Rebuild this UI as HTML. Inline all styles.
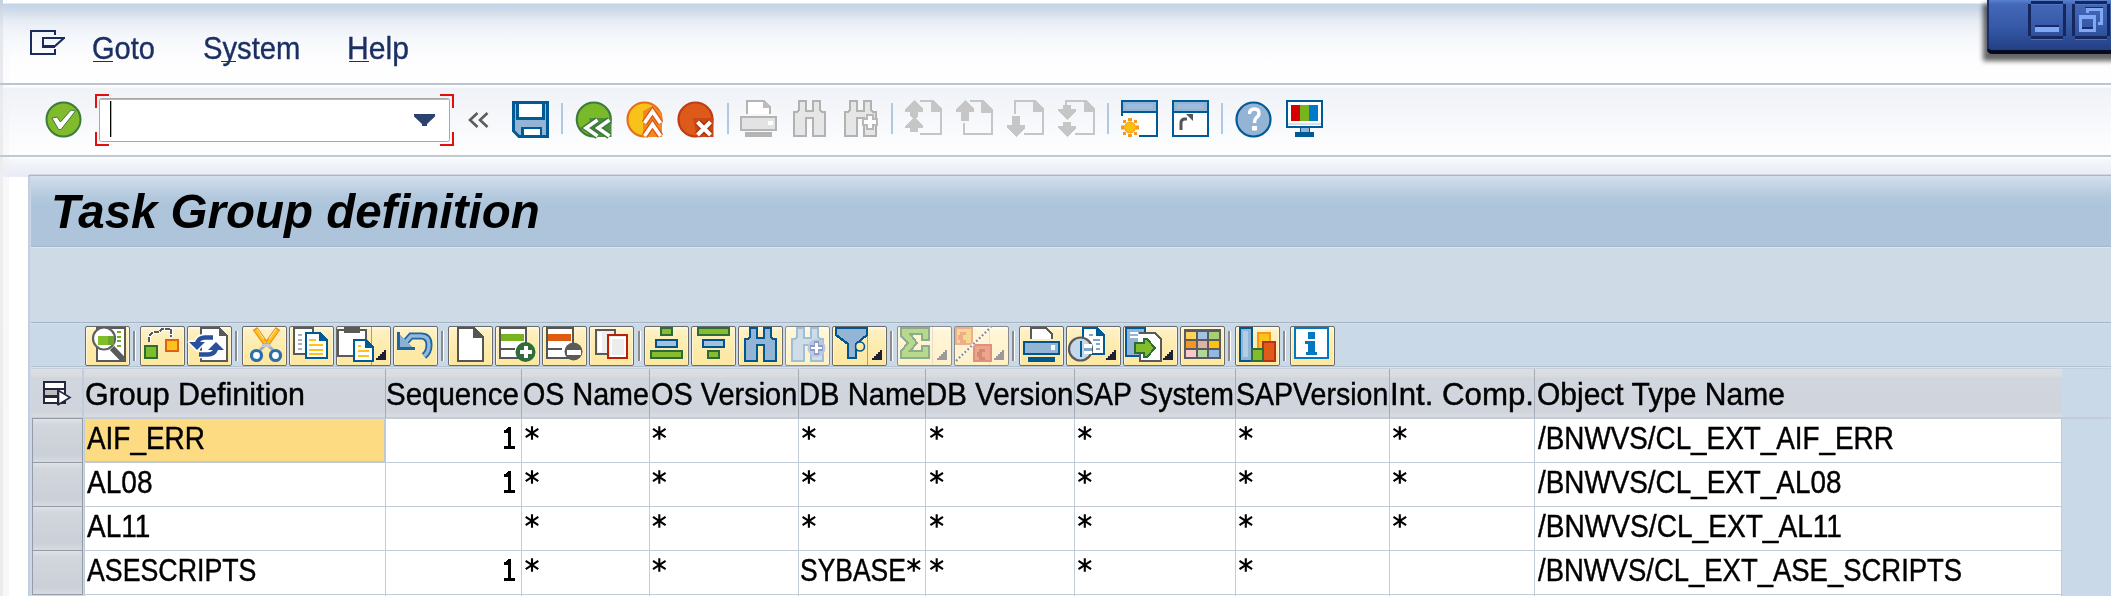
<!DOCTYPE html>
<html><head><meta charset="utf-8"><style>
*{margin:0;padding:0;box-sizing:border-box}
html,body{width:2111px;height:596px;overflow:hidden;background:#fff;font-family:"Liberation Sans",sans-serif}
.a{position:absolute}
svg{position:absolute;overflow:visible}
.txt{position:absolute;font-size:32px;color:#000;white-space:nowrap;line-height:1;transform-origin:0 0;-webkit-text-stroke:0.45px #000}
.sel{position:absolute;left:32px;width:51px;height:45px;border:1px solid #939da9;background:linear-gradient(#dfe2e7,#d2d6dd 6px,#cbd0d8 36px,#d6dadf 42px)}
.menu{position:absolute;color:#1b2f63;font-size:32px;line-height:1;white-space:nowrap;transform-origin:0 0;-webkit-text-stroke:0.35px #1b2f63}
.btn{position:absolute;top:326px;height:40px;border:1px solid #6b6b6b;border-radius:2px;background:linear-gradient(#fffbea 0,#fdf1c4 3px,#fdeeb6 12px,#fde9a6 28px,#fde8a2);box-shadow:inset 1px 0 0 #fff6d8,inset -1px 0 0 #fff6d8}
.btn.dis{border-color:#8c8c8c;background:linear-gradient(#fffdf4 0,#fff6d8 4px,#fff2cc 30px,#fff0c4)}
</style></head><body>
<div class="a" style="left:0px;top:0px;width:2111px;height:83px;background:linear-gradient(#fff 0,#fff 3px,#c4d4e8 4px,#cbd8e9 9px,#d8e0eb 14px,#e5ebf3 20px,#eef2f8 28px,#f7f9fc 42px,#fdfdfe 60px,#fff 83px);"></div>
<div class="a" style="left:0px;top:85px;width:2111px;height:71px;background:linear-gradient(#fdfeff 0,#fdfeff 2px,#eff2f7 3px,#f5f7fa 30px,#fafbfd 50px,#fefefe 70px);"></div>
<div class="a" style="left:0px;top:157px;width:2111px;height:20px;background:linear-gradient(#fdfdfe 0,#fdfdfe 1px,#f6f8fb 2px,#eef1f8 10px,#e8ecf6 18px);"></div>
<div class="a" style="left:0px;top:0px;width:3px;height:596px;background:linear-gradient(#c4d0e0 0,#e5e8ec 30px,#eceef0 175px,#ebebec 596px);"></div>
<div class="a" style="left:3px;top:0px;width:6px;height:596px;background:linear-gradient(rgba(255,255,255,0) 0,rgba(240,240,242,0.5) 200px,rgba(240,240,242,0.5) 596px);"></div>
<div class="a" style="left:0px;top:83px;width:2111px;height:2px;background:#bcc5d1;"></div>
<div class="a" style="left:0px;top:155px;width:2111px;height:2px;background:#c0c8d3;"></div>
<div class="menu" style="left:91.6px;top:32.4px;transform:scaleX(0.9075)">Goto</div>
<div class="a" style="left:93px;top:61px;width:20px;height:1px;background:#1b2f63;"></div>
<div class="menu" style="left:202.7px;top:32.4px;transform:scaleX(0.9136)">System</div>
<div class="a" style="left:221px;top:61px;width:15px;height:1px;background:#1b2f63;"></div>
<div class="menu" style="left:347.1px;top:32.4px;transform:scaleX(0.9403)">Help</div>
<div class="a" style="left:349px;top:61px;width:20px;height:1px;background:#1b2f63;"></div>
<svg style="left:0;top:0" width="2111" height="175" viewBox="0 0 2111 175">
<defs>
<linearGradient id="wbox" x1="0" y1="0" x2="0" y2="1"><stop offset="0" stop-color="#5a80d0"/><stop offset="0.08" stop-color="#4468b8"/><stop offset="0.5" stop-color="#3659a6"/><stop offset="1" stop-color="#1f3a80"/></linearGradient>
<filter id="blur2" x="-20%" y="-20%" width="140%" height="160%"><feGaussianBlur stdDeviation="2.5"/></filter>
</defs>
<g shape-rendering="crispEdges">
<!-- menu icon -->
<g fill="#1b2b5c">
<rect x="30" y="30" width="26" height="2.2"/><rect x="30" y="30" width="2.2" height="25"/><rect x="30" y="52.8" width="26" height="2.2"/>
<rect x="53.8" y="30" width="2.2" height="5"/><rect x="53.8" y="48.5" width="2.2" height="6.5"/>
<rect x="42" y="36.8" width="2.2" height="10.8"/><rect x="42" y="36.8" width="22.6" height="2.2"/><rect x="42" y="45.4" width="12.5" height="2.2"/>
</g>
</g>
<path d="M64,38 L54.5,46.5" stroke="#1b2b5c" stroke-width="2.2"/>

<!-- window controls -->
<rect x="1983" y="4" width="140" height="57" fill="#000" opacity="0.6" filter="url(#blur2)"/>
<path d="M1987,0 H2111 V54 H1993 Q1987,54 1987,48 Z" fill="url(#wbox)"/>
<path d="M1987,48 Q1987,54 1993,54 H2111 V50 H1991 Z" fill="#050a20"/>
<rect x="1987" y="0" width="2" height="49" fill="#1c2f6a"/>
<g shape-rendering="crispEdges">
<g fill="#16275e">
<rect x="2031" y="1" width="32" height="3"/><rect x="2031" y="36" width="32" height="3"/><rect x="2028" y="4" width="3" height="32"/><rect x="2063" y="4" width="3" height="32"/>
<rect x="2075" y="1" width="32" height="3"/><rect x="2075" y="36" width="32" height="3"/><rect x="2072" y="4" width="3" height="32"/><rect x="2107" y="4" width="3" height="32"/>
</g>
<g fill="#5a78c0" opacity="0.8">
<rect x="2031" y="39" width="32" height="1"/><rect x="2075" y="39" width="32" height="1"/>
<rect x="2031" y="4" width="32" height="1"/><rect x="2075" y="4" width="32" height="1"/>
</g>
<rect x="2035" y="25" width="24" height="1.5" fill="#1a2c68"/>
<rect x="2035" y="26.5" width="24" height="5.5" fill="#80a8f4"/>
<rect x="2085" y="7" width="18" height="1" fill="#1a2c68"/>
<path d="M2086,8 h17 v17 h-5 v-3 h2 v-11 h-11 v2 h-3 z" fill="#80a8f4"/>
<path d="M2079,15 h17 v17 h-17 z M2082,19 v10 h11 v-10 z" fill="#80a8f4" fill-rule="evenodd"/>
<rect x="2082" y="27" width="11" height="2" fill="#1a2c68"/>
</g>

<!-- check -->
<circle cx="63.5" cy="119.5" r="17" fill="#7fbb2c" stroke="#3d7b3d" stroke-width="2"/>
<path d="M52,118 L57,117 L60.5,122 L71,110 L75.5,111 L61,129.5 L58.5,129.5 Z" fill="#fff" stroke="#3d7b3d" stroke-width="1"/>

<!-- command field -->
<rect x="99.5" y="98.5" width="350" height="43" rx="2" fill="#fff" stroke="#a8a8a8" stroke-width="1"/>
<rect x="100" y="99" width="349" height="1" fill="#b8b8b8"/>
<g shape-rendering="crispEdges" fill="#e01010">
<rect x="95" y="94" width="2" height="14"/><rect x="95" y="94" width="14" height="2"/>
<rect x="95" y="132" width="2" height="14"/><rect x="95" y="144" width="14" height="2"/>
<rect x="452" y="94" width="2" height="14"/><rect x="440" y="94" width="14" height="2"/>
<rect x="452" y="132" width="2" height="14"/><rect x="440" y="144" width="14" height="2"/>
</g>
<rect x="110" y="101" width="1.3" height="36" fill="#000"/>
<path d="M414,114 H435 V116.5 L427,124 V126 H422 V124 L414,116.5 Z" fill="#2b4170"/>
<path d="M477.5,113 L470,120 L477.5,127 M487.5,113 L480,120 L487.5,127" fill="none" stroke="#5c5c5c" stroke-width="2.6"/>

<!-- save -->
<path d="M513.5,102.5 H547.5 V136.5 H519 L513.5,131 Z" fill="#94b4d6" stroke="#005a96" stroke-width="3"/>
<g shape-rendering="crispEdges">
<rect x="516" y="103" width="29" height="17" fill="#005a96"/>
<rect x="519" y="104" width="23" height="13" fill="#fff"/>
<rect x="521" y="127" width="21" height="11" fill="#005a96"/>
<rect x="524" y="129" width="16" height="6" fill="#fff"/>
</g>

<!-- separators -->
<g fill="#b0c8e2" shape-rendering="crispEdges">
<rect x="561" y="103" width="2" height="31"/><rect x="727" y="103" width="2" height="31"/><rect x="891" y="103" width="2" height="31"/><rect x="1107" y="103" width="2" height="31"/><rect x="1221" y="103" width="2" height="31"/>
</g>

<!-- back (green) -->
<circle cx="593.8" cy="119.5" r="17" fill="#7ab92a" stroke="#3b7b3b" stroke-width="2.2"/>
<path d="M589,118 H611.5 V137 H594 Z" fill="#4d8c3c"/>
<path d="M597.5,120 L586,128 L597.5,136 M609.5,120 L598,128 L609.5,136" fill="none" stroke="#3b7b3b" stroke-width="6.5" stroke-linejoin="miter"/>
<path d="M597.5,120 L586,128 L597.5,136 M609.5,120 L598,128 L609.5,136" fill="none" stroke="#fff" stroke-width="3.6" stroke-linejoin="miter"/>

<!-- exit (orange) -->
<circle cx="644.5" cy="119.5" r="17" fill="#f7c21a" stroke="#e46e1a" stroke-width="2.2"/>
<path d="M643,137 V111 L652.5,106 L662,113 V137 Z" fill="#ef8a20"/>
<path d="M644.5,123 L652.5,111.5 L660.5,123 M644.5,136 L652.5,124.5 L660.5,136" fill="none" stroke="#e05a16" stroke-width="6.5"/>
<path d="M644.5,123 L652.5,111.5 L660.5,123 M644.5,136 L652.5,124.5 L660.5,136" fill="none" stroke="#fff" stroke-width="3.6"/>

<!-- cancel (red) -->
<circle cx="695.5" cy="119.5" r="17" fill="#dd5a1b" stroke="#c13c12" stroke-width="2.2"/>
<path d="M693,118 H713.5 V137 H697 Z" fill="#c84816"/>
<path d="M697.5,122 L710.5,135 M710.5,122 L697.5,135" fill="none" stroke="#b8320f" stroke-width="7"/>
<path d="M697.5,122 L710.5,135 M710.5,122 L697.5,135" fill="none" stroke="#fff" stroke-width="4"/>

<!-- printer -->
<g shape-rendering="crispEdges">
<path d="M747,114 V101 H764 L770,107 V114" fill="#fff" stroke="#b4b4b4" stroke-width="2"/>
<path d="M763,101 h2 l5,5 v2 h-7 z" fill="#bdbdbd"/>
<rect x="741" y="117" width="35" height="13" fill="#e3e3e3" stroke="#b4b4b4" stroke-width="2"/>
<rect x="768" y="121" width="5" height="4" fill="#fff"/>
<rect x="745" y="132" width="27" height="5" fill="#b4b4b4"/>
</g>

<!-- binoculars -->
<g fill="#e6e6e6" stroke="#b2b2b2" stroke-width="2.2" shape-rendering="crispEdges">
<path d="M799,101 H806 V111 H813 V101 H820 V110 L822,112 H825 V136 H813 V118 H806 V136 H794 V112 H797 L799,110 Z"/>
<path d="M850,101 H857 V111 H864 V101 H871 V110 L873,112 H876 V136 H864 V118 H857 V136 H845 V112 H848 L850,110 Z"/>
</g>
<g shape-rendering="crispEdges">
<path d="M866,114 h8 v4 h4 v8 h-4 v4 h-8 v-4 h-4 v-8 h4 z" fill="#b8b8b8"/>
<path d="M868,116 h4 v4 h4 v4 h-4 v4 h-4 v-4 h-4 v-4 h4 z" fill="#fff"/>
</g>

<!-- page nav icons -->
<g fill="none" stroke="#c6c6c6" stroke-width="2" shape-rendering="crispEdges">
<path d="M920,101 H933 L941,109 V134 H920"/>
<path d="M970,101 H983 L992,110 V134 H964 V123"/>
<path d="M1015,114 V101 H1035 L1043,109 V134 H1024"/>
<path d="M1066,106 V101 H1086 L1094,109 V134 H1075"/>
</g>
<g fill="#c6c6c6" shape-rendering="crispEdges">
<path d="M931,101 h2 l9,9 v2 h-11 z"/><path d="M981,101 h2 l10,10 v2 h-12 z"/><path d="M1033,101 h2 l9,9 v2 h-11 z"/><path d="M1084,101 h2 l9,9 v2 h-11 z"/>
<path d="M914,100 L923,109 V112 H918 V116 L916,118 H912 L910,116 V112 H905 V109 Z"/>
<path d="M914,117 L923,126 V128 H918 V132 H910 V128 H905 V126 Z"/>
<path d="M965,100 L974,109 V112 H969 V121 H961 V112 H956 V109 Z"/>
<path d="M1016,137 L1025,128 V125 H1020 V116 H1012 V125 H1007 V128 Z"/>
<path d="M1067,137 L1076,128 V126 H1071 V122 H1063 V126 H1058 V128 Z"/>
<path d="M1067,120 L1076,111 V109 H1071 V105 H1063 V109 H1058 V111 Z"/>
</g>

<!-- new session -->
<g shape-rendering="crispEdges">
<rect x="1122" y="101" width="35" height="35" fill="#fff" stroke="#005a96" stroke-width="2"/>
<rect x="1123" y="102" width="33" height="10" fill="#94b4d6"/>
<rect x="1126" y="104" width="27" height="5" fill="#9dbbdc"/>
<rect x="1123" y="111" width="33" height="2" fill="#005a96"/>
<rect x="1173" y="101" width="35" height="35" fill="#fff" stroke="#005a96" stroke-width="2"/>
<rect x="1174" y="102" width="33" height="10" fill="#94b4d6"/>
<rect x="1177" y="104" width="27" height="5" fill="#9dbbdc"/>
<rect x="1174" y="111" width="33" height="2" fill="#005a96"/>
<rect x="1120" y="116" width="19" height="22" fill="#fafbfd"/>
</g>
<g fill="#f59a1a">
<rect x="1128" y="118" width="4" height="3"/><rect x="1128" y="134" width="4" height="3"/><rect x="1121" y="125.5" width="3" height="4"/><rect x="1136" y="125.5" width="3" height="4"/>
<rect x="1123" y="120" width="3" height="3"/><rect x="1134" y="120" width="3" height="3"/><rect x="1123" y="132" width="3" height="3"/><rect x="1134" y="132" width="3" height="3"/>
</g>
<circle cx="1130" cy="127.5" r="5.5" fill="#fbbf10" stroke="#f59a1a" stroke-width="1"/>
<path d="M1181,130 V123 Q1181,119 1185,119 H1187" fill="none" stroke="#555" stroke-width="3"/>
<path d="M1186,114 L1193,114 L1193,121 Z" fill="#555"/>

<!-- help -->
<circle cx="1253.5" cy="119.5" r="17" fill="#94b4d6" stroke="#005a96" stroke-width="2.2"/>
<path d="M1249.5,114 Q1249.5,109 1254.5,109 Q1259,109 1259,113.5 Q1259,116 1256,118 Q1254.5,119.5 1254.5,123" fill="none" stroke="#fff" stroke-width="3.4"/>
<rect x="1252" y="126" width="5" height="4.5" fill="#fff"/>

<!-- customize -->
<g shape-rendering="crispEdges">
<rect x="1287" y="101" width="35" height="26" fill="#fff" stroke="#005a96" stroke-width="2"/>
<rect x="1291" y="105" width="9" height="16" fill="#d40000"/>
<rect x="1300" y="105" width="9" height="16" fill="#78b41e"/>
<rect x="1309" y="105" width="9" height="16" fill="#0079c6"/>
<rect x="1288" y="123" width="33" height="2" fill="#d4e2f0"/>
<rect x="1300" y="127" width="9" height="6" fill="#94b4d6" stroke="#005a96" stroke-width="1"/>
<rect x="1295" y="132" width="19" height="5" fill="#005a96"/>
</g>
</svg>

<div class="a" style="left:28px;top:175px;width:2083px;height:421px;background:#c9d9e7;border-left:2px solid #c2cfdc"></div>
<div class="a" style="left:31px;top:176px;width:2080px;height:71px;background:linear-gradient(#d3dfeb 0,#c3d4e5 10px,#b2c8dd 22px,#adc5db 30px,#adc4da 71px);"></div>
<div class="a" style="left:29px;top:174px;width:2082px;height:1px;background:#d3d8e0;"></div>
<div class="a" style="left:29px;top:175px;width:2082px;height:1px;background:#a9b6c6;"></div>
<div class="a" style="left:51.2px;top:188.4px;font-size:48px;line-height:1;font-weight:bold;font-style:italic;white-space:nowrap;transform-origin:0 0;transform:scaleX(0.9888)">Task Group definition</div>
<div class="a" style="left:31px;top:246px;width:2080px;height:1px;background:#a5b7ca;"></div>
<div class="a" style="left:31px;top:247px;width:2080px;height:1px;background:#dde5ee;"></div>
<div class="a" style="left:31px;top:248px;width:2080px;height:74px;background:#cedbe7;"></div>
<div class="a" style="left:31px;top:322px;width:2080px;height:1px;background:#a6b5c4;"></div>
<div class="a" style="left:31px;top:323px;width:2080px;height:1px;background:#d5e0ea;"></div>
<div class="a" style="left:31px;top:324px;width:2080px;height:42px;background:#c9d9e7;"></div>
<div class="a" style="left:31px;top:366px;width:2080px;height:1px;background:#b3c1ce;"></div>
<div class="a" style="left:31px;top:367px;width:2080px;height:1px;background:#d8e2ec;"></div>
<div class="a" style="left:31px;top:368px;width:2080px;height:1px;background:#c5d0dc;"></div>
<div class="a" style="left:31px;top:369px;width:2031px;height:49px;background:linear-gradient(#e3e5e9 0,#dadde2 1px,#d9dce1 7px,#d1d5dc 9px,#d0d4dc 43px,#d7dbe0 45px,#d8dce1 49px);"></div>
<div class="a" style="left:31px;top:417px;width:2080px;height:2px;background:#c3ccd7;"></div>
<div class="a" style="left:82px;top:369px;width:2px;height:49px;background:#c3ccd8;"></div>
<div class="a" style="left:385px;top:369px;width:1px;height:49px;background:#a3acb7;"></div>
<div class="a" style="left:521px;top:369px;width:1px;height:49px;background:#a3acb7;"></div>
<div class="a" style="left:649px;top:369px;width:1px;height:49px;background:#a3acb7;"></div>
<div class="a" style="left:798px;top:369px;width:1px;height:49px;background:#a3acb7;"></div>
<div class="a" style="left:925px;top:369px;width:1px;height:49px;background:#a3acb7;"></div>
<div class="a" style="left:1074px;top:369px;width:1px;height:49px;background:#a3acb7;"></div>
<div class="a" style="left:1235px;top:369px;width:1px;height:49px;background:#a3acb7;"></div>
<div class="a" style="left:1389px;top:369px;width:1px;height:49px;background:#a3acb7;"></div>
<div class="a" style="left:1534px;top:369px;width:1px;height:49px;background:#a3acb7;"></div>
<div class="a" style="left:84px;top:419px;width:1978px;height:177px;background:#fff;"></div>
<div class="a" style="left:84px;top:462px;width:1978px;height:1px;background:#c2cbd8;"></div>
<div class="a" style="left:84px;top:506px;width:1978px;height:1px;background:#c2cbd8;"></div>
<div class="a" style="left:84px;top:550px;width:1978px;height:1px;background:#c2cbd8;"></div>
<div class="a" style="left:84px;top:594px;width:1978px;height:1px;background:#c2cbd8;"></div>
<div class="a" style="left:385px;top:419px;width:1px;height:177px;background:#c2cbd8;"></div>
<div class="a" style="left:521px;top:419px;width:1px;height:177px;background:#c2cbd8;"></div>
<div class="a" style="left:649px;top:419px;width:1px;height:177px;background:#c2cbd8;"></div>
<div class="a" style="left:798px;top:419px;width:1px;height:177px;background:#c2cbd8;"></div>
<div class="a" style="left:925px;top:419px;width:1px;height:177px;background:#c2cbd8;"></div>
<div class="a" style="left:1074px;top:419px;width:1px;height:177px;background:#c2cbd8;"></div>
<div class="a" style="left:1235px;top:419px;width:1px;height:177px;background:#c2cbd8;"></div>
<div class="a" style="left:1389px;top:419px;width:1px;height:177px;background:#c2cbd8;"></div>
<div class="a" style="left:1534px;top:419px;width:1px;height:177px;background:#c2cbd8;"></div>
<div class="a" style="left:2061px;top:419px;width:1px;height:177px;background:#c2cbd8;"></div>
<div class="a" style="left:84px;top:419px;width:1px;height:177px;background:#c2cbd8;"></div>
<div class="a" style="left:85px;top:419px;width:299px;height:42px;background:#fcdb83;"></div>
<div class="a" style="left:384px;top:419px;width:1px;height:43px;background:#bcc7d6;"></div>
<div class="a" style="left:85px;top:461px;width:300px;height:1px;background:#bcc7d6;"></div>
<div class="sel" style="top:418px"></div>
<div class="sel" style="top:462px"></div>
<div class="sel" style="top:506px"></div>
<div class="sel" style="top:550px"></div>
<div class="txt" style="left:85.1px;top:377.9px;transform:scaleX(0.9515)">Group Definition</div>
<div class="txt" style="left:386.2px;top:377.9px;transform:scaleX(0.9214)">Sequence</div>
<div class="txt" style="left:522.6px;top:377.9px;transform:scaleX(0.8964)">OS Name</div>
<div class="txt" style="left:650.9px;top:377.9px;transform:scaleX(0.9038)">OS Version</div>
<div class="txt" style="left:799.2px;top:377.9px;transform:scaleX(0.9127)">DB Name</div>
<div class="txt" style="left:925.7px;top:377.9px;transform:scaleX(0.9213)">DB Version</div>
<div class="txt" style="left:1075.2px;top:377.9px;transform:scaleX(0.8880)">SAP System</div>
<div class="txt" style="left:1236.2px;top:377.9px;transform:scaleX(0.8916)">SAPVersion</div>
<div class="txt" style="left:1389.9px;top:377.9px;transform:scaleX(0.9754)">Int. Comp.</div>
<div class="txt" style="left:1536.7px;top:377.9px;transform:scaleX(0.9374)">Object Type Name</div>
<div class="txt" style="left:87.3px;top:421.9px;transform:scaleX(0.8722)">AIF_ERR</div>
<div class="txt" style="left:1537.6px;top:421.9px;transform:scaleX(0.8698)">/BNWVS/CL_EXT_AIF_ERR</div>
<div class="txt" style="left:87.3px;top:465.9px;transform:scaleX(0.8767)">AL08</div>
<div class="txt" style="left:1537.6px;top:465.9px;transform:scaleX(0.8703)">/BNWVS/CL_EXT_AL08</div>
<div class="txt" style="left:87.3px;top:509.9px;transform:scaleX(0.8732)">AL11</div>
<div class="txt" style="left:1537.6px;top:509.9px;transform:scaleX(0.8779)">/BNWVS/CL_EXT_AL11</div>
<div class="txt" style="left:87.3px;top:553.9px;transform:scaleX(0.8358)">ASESCRIPTS</div>
<div class="txt" style="left:1537.6px;top:553.9px;transform:scaleX(0.8580)">/BNWVS/CL_EXT_ASE_SCRIPTS</div>
<div class="txt" style="left:799.9px;top:553.9px;transform:scaleX(0.8272)">SYBASE</div>
<svg style="left:0;top:0" width="2111" height="596" viewBox="0 0 2111 596">
<path d="M532.0,426.2 V439.8 M525.7,428.8 L538.3,437.2 M525.7,437.2 L538.3,428.8" stroke="#000" stroke-width="2.1" fill="none"/>
<path d="M659.3,426.2 V439.8 M653.0,428.8 L665.5999999999999,437.2 M653.0,437.2 L665.5999999999999,428.8" stroke="#000" stroke-width="2.1" fill="none"/>
<path d="M808.9,426.2 V439.8 M802.6,428.8 L815.1999999999999,437.2 M802.6,437.2 L815.1999999999999,428.8" stroke="#000" stroke-width="2.1" fill="none"/>
<path d="M936.6999999999999,426.2 V439.8 M930.4,428.8 L942.9999999999999,437.2 M930.4,437.2 L942.9999999999999,428.8" stroke="#000" stroke-width="2.1" fill="none"/>
<path d="M1084.8,426.2 V439.8 M1078.5,428.8 L1091.1,437.2 M1078.5,437.2 L1091.1,428.8" stroke="#000" stroke-width="2.1" fill="none"/>
<path d="M1245.8,426.2 V439.8 M1239.5,428.8 L1252.1,437.2 M1239.5,437.2 L1252.1,428.8" stroke="#000" stroke-width="2.1" fill="none"/>
<path d="M1399.8,426.2 V439.8 M1393.5,428.8 L1406.1,437.2 M1393.5,437.2 L1406.1,428.8" stroke="#000" stroke-width="2.1" fill="none"/>
<path d="M532.0,470.2 V483.8 M525.7,472.8 L538.3,481.2 M525.7,481.2 L538.3,472.8" stroke="#000" stroke-width="2.1" fill="none"/>
<path d="M659.3,470.2 V483.8 M653.0,472.8 L665.5999999999999,481.2 M653.0,481.2 L665.5999999999999,472.8" stroke="#000" stroke-width="2.1" fill="none"/>
<path d="M808.9,470.2 V483.8 M802.6,472.8 L815.1999999999999,481.2 M802.6,481.2 L815.1999999999999,472.8" stroke="#000" stroke-width="2.1" fill="none"/>
<path d="M936.6999999999999,470.2 V483.8 M930.4,472.8 L942.9999999999999,481.2 M930.4,481.2 L942.9999999999999,472.8" stroke="#000" stroke-width="2.1" fill="none"/>
<path d="M1084.8,470.2 V483.8 M1078.5,472.8 L1091.1,481.2 M1078.5,481.2 L1091.1,472.8" stroke="#000" stroke-width="2.1" fill="none"/>
<path d="M1245.8,470.2 V483.8 M1239.5,472.8 L1252.1,481.2 M1239.5,481.2 L1252.1,472.8" stroke="#000" stroke-width="2.1" fill="none"/>
<path d="M1399.8,470.2 V483.8 M1393.5,472.8 L1406.1,481.2 M1393.5,481.2 L1406.1,472.8" stroke="#000" stroke-width="2.1" fill="none"/>
<path d="M532.0,514.2 V527.8 M525.7,516.8 L538.3,525.2 M525.7,525.2 L538.3,516.8" stroke="#000" stroke-width="2.1" fill="none"/>
<path d="M659.3,514.2 V527.8 M653.0,516.8 L665.5999999999999,525.2 M653.0,525.2 L665.5999999999999,516.8" stroke="#000" stroke-width="2.1" fill="none"/>
<path d="M808.9,514.2 V527.8 M802.6,516.8 L815.1999999999999,525.2 M802.6,525.2 L815.1999999999999,516.8" stroke="#000" stroke-width="2.1" fill="none"/>
<path d="M936.6999999999999,514.2 V527.8 M930.4,516.8 L942.9999999999999,525.2 M930.4,525.2 L942.9999999999999,516.8" stroke="#000" stroke-width="2.1" fill="none"/>
<path d="M1084.8,514.2 V527.8 M1078.5,516.8 L1091.1,525.2 M1078.5,525.2 L1091.1,516.8" stroke="#000" stroke-width="2.1" fill="none"/>
<path d="M1245.8,514.2 V527.8 M1239.5,516.8 L1252.1,525.2 M1239.5,525.2 L1252.1,516.8" stroke="#000" stroke-width="2.1" fill="none"/>
<path d="M1399.8,514.2 V527.8 M1393.5,516.8 L1406.1,525.2 M1393.5,525.2 L1406.1,516.8" stroke="#000" stroke-width="2.1" fill="none"/>
<path d="M532.0,558.2 V571.8 M525.7,560.8 L538.3,569.2 M525.7,569.2 L538.3,560.8" stroke="#000" stroke-width="2.1" fill="none"/>
<path d="M659.3,558.2 V571.8 M653.0,560.8 L665.5999999999999,569.2 M653.0,569.2 L665.5999999999999,560.8" stroke="#000" stroke-width="2.1" fill="none"/>
<path d="M913.8,558.2 V571.8 M907.5,560.8 L920.0999999999999,569.2 M907.5,569.2 L920.0999999999999,560.8" stroke="#000" stroke-width="2.1" fill="none"/>
<path d="M936.6999999999999,558.2 V571.8 M930.4,560.8 L942.9999999999999,569.2 M930.4,569.2 L942.9999999999999,560.8" stroke="#000" stroke-width="2.1" fill="none"/>
<path d="M1084.8,558.2 V571.8 M1078.5,560.8 L1091.1,569.2 M1078.5,569.2 L1091.1,560.8" stroke="#000" stroke-width="2.1" fill="none"/>
<path d="M1245.8,558.2 V571.8 M1239.5,560.8 L1252.1,569.2 M1239.5,569.2 L1252.1,560.8" stroke="#000" stroke-width="2.1" fill="none"/>
<path d="M508,427 h3 v19 h4 v3 h-11 v-3 h4 v-13 h-4 v-3 h2 z" fill="#000" shape-rendering="crispEdges"/>
<path d="M508,471 h3 v19 h4 v3 h-11 v-3 h4 v-13 h-4 v-3 h2 z" fill="#000" shape-rendering="crispEdges"/>
<path d="M508,559 h3 v19 h4 v3 h-11 v-3 h4 v-13 h-4 v-3 h2 z" fill="#000" shape-rendering="crispEdges"/>
</svg>
<div class="btn" style="left:85px;width:45px"></div>
<div class="btn" style="left:140px;width:45px"></div>
<div class="btn" style="left:187px;width:45px"></div>
<div class="btn" style="left:242px;width:45px"></div>
<div class="btn" style="left:289px;width:45px"></div>
<div class="btn" style="left:336px;width:55px"></div>
<div class="btn" style="left:393px;width:45px"></div>
<div class="btn" style="left:448px;width:45px"></div>
<div class="btn" style="left:495px;width:45px"></div>
<div class="btn" style="left:542px;width:45px"></div>
<div class="btn" style="left:589px;width:45px"></div>
<div class="btn" style="left:644px;width:45px"></div>
<div class="btn" style="left:691px;width:45px"></div>
<div class="btn" style="left:738px;width:45px"></div>
<div class="btn dis" style="left:785px;width:45px"></div>
<div class="btn" style="left:832px;width:55px"></div>
<div class="btn dis" style="left:897px;width:55px"></div>
<div class="btn dis" style="left:954px;width:55px"></div>
<div class="btn" style="left:1019px;width:45px"></div>
<div class="btn" style="left:1066px;width:55px"></div>
<div class="btn" style="left:1123px;width:55px"></div>
<div class="btn" style="left:1180px;width:45px"></div>
<div class="btn" style="left:1235px;width:45px"></div>
<div class="btn" style="left:1290px;width:45px"></div>
<svg style="left:0;top:0" width="2111" height="596" viewBox="0 0 2111 596">
<rect x="133" y="331" width="2" height="30" fill="#8c8c8c" shape-rendering="crispEdges"/><rect x="135" y="331" width="1" height="30" fill="#fff" shape-rendering="crispEdges"/>
<rect x="235" y="331" width="2" height="30" fill="#8c8c8c" shape-rendering="crispEdges"/><rect x="237" y="331" width="1" height="30" fill="#fff" shape-rendering="crispEdges"/>
<rect x="441" y="331" width="2" height="30" fill="#8c8c8c" shape-rendering="crispEdges"/><rect x="443" y="331" width="1" height="30" fill="#fff" shape-rendering="crispEdges"/>
<rect x="638" y="331" width="2" height="30" fill="#8c8c8c" shape-rendering="crispEdges"/><rect x="640" y="331" width="1" height="30" fill="#fff" shape-rendering="crispEdges"/>
<rect x="890" y="331" width="2" height="30" fill="#8c8c8c" shape-rendering="crispEdges"/><rect x="892" y="331" width="1" height="30" fill="#fff" shape-rendering="crispEdges"/>
<rect x="1012" y="331" width="2" height="30" fill="#8c8c8c" shape-rendering="crispEdges"/><rect x="1014" y="331" width="1" height="30" fill="#fff" shape-rendering="crispEdges"/>
<rect x="1228" y="331" width="2" height="30" fill="#8c8c8c" shape-rendering="crispEdges"/><rect x="1230" y="331" width="1" height="30" fill="#fff" shape-rendering="crispEdges"/>
<rect x="1283" y="331" width="2" height="30" fill="#8c8c8c" shape-rendering="crispEdges"/><rect x="1285" y="331" width="1" height="30" fill="#fff" shape-rendering="crispEdges"/>
<rect x="371" y="327" width="1" height="38" fill="#a89f80" shape-rendering="crispEdges"/>
<path d="M386,350 V360 H376 V358 H378 V356 H380 V354 H382 V352 H384 V350 Z" fill="#1e1e34" shape-rendering="crispEdges"/>
<rect x="867" y="327" width="1" height="38" fill="#a89f80" shape-rendering="crispEdges"/>
<path d="M882,350 V360 H872 V358 H874 V356 H876 V354 H878 V352 H880 V350 Z" fill="#1e1e34" shape-rendering="crispEdges"/>
<rect x="932" y="327" width="1" height="38" fill="#e8e0c8" shape-rendering="crispEdges"/>
<path d="M947,350 V360 H937 V358 H939 V356 H941 V354 H943 V352 H945 V350 Z" fill="#9a9a9e" shape-rendering="crispEdges"/>
<rect x="989" y="327" width="1" height="38" fill="#e8e0c8" shape-rendering="crispEdges"/>
<path d="M1004,350 V360 H994 V358 H996 V356 H998 V354 H1000 V352 H1002 V350 Z" fill="#9a9a9e" shape-rendering="crispEdges"/>
<path d="M1116,350 V360 H1106 V358 H1108 V356 H1110 V354 H1112 V352 H1114 V350 Z" fill="#1e1e34" shape-rendering="crispEdges"/>
<path d="M1173,350 V360 H1163 V358 H1165 V356 H1167 V354 H1169 V352 H1171 V350 Z" fill="#1e1e34" shape-rendering="crispEdges"/>
<g shape-rendering="crispEdges">
<!-- header selector icon -->
<rect x="44" y="382" width="21" height="21" fill="#fff" stroke="#262640" stroke-width="2"/>
<rect x="45" y="388" width="20" height="2" fill="#262640"/>
<rect x="45" y="390" width="12" height="5" fill="#bdbdbd"/>
<rect x="45" y="395" width="13" height="2.5" fill="#262640"/>
<path d="M58.5,390.5 L70,397.5 L58.5,404.5 Z" fill="#fff" stroke="#262640" stroke-width="1.6" shape-rendering="auto"/>
<rect x="57" y="390" width="2" height="15" fill="#262640"/>
<!-- 1 details: doc + magnifier -->
<rect x="97" y="328" width="28" height="33" fill="#fff" stroke="#5a5a5a" stroke-width="2.2"/>
<circle cx="104" cy="338.5" r="11" fill="#fff" stroke="#606060" stroke-width="2.2" shape-rendering="auto"/>
<rect x="98" y="336" width="16" height="9" fill="#80bd2a"/><rect x="108" y="336" width="6" height="9" fill="#6aa82a"/>
<rect x="117" y="331" width="4" height="2" fill="#6fb020"/><rect x="117" y="335.5" width="4" height="2" fill="#6fb020"/><rect x="117" y="340" width="4" height="2" fill="#6fb020"/><rect x="117" y="344.5" width="4" height="2" fill="#6fb020"/>
<path d="M112,348 L123.5,360" stroke="#5a5a5a" stroke-width="6" shape-rendering="auto"/>
<!-- 2 choose layout: squares + dashed curve -->
<path d="M149,342 V336 L153,332 H159 L162,329 H171 V337" fill="none" stroke="#fff" stroke-width="3"/>
<path d="M149,342 V336 L153,332 H159 L162,329 H171 V337" fill="none" stroke="#5a5a5a" stroke-width="2.2" stroke-dasharray="5,1.2"/>
<rect x="145" y="346" width="12" height="12" fill="#7cbd2a" stroke="#2e6b35" stroke-width="2"/>
<rect x="166" y="340" width="12" height="11" fill="#fcc419" stroke="#e0601a" stroke-width="2"/>
<!-- 3 refresh -->
<path d="M201,328 H219 L227,336 V361 H201 Z" fill="#fff" stroke="#5a5a5a" stroke-width="2"/>
<path d="M219,327 L228,336 H219 Z" fill="#5a5a5a"/>
<g stroke="#fff" stroke-width="3" stroke-linejoin="round" fill="#fff" shape-rendering="auto">
<path d="M213,337.5 H205 Q199,337.5 197,343" fill="none" stroke-width="7.5"/>
<path d="M189,342 H205 L197,350 Z"/>
<path d="M199,354.5 H208 Q214,354.5 216,349" fill="none" stroke-width="7.5"/>
<path d="M208,350 H224 L216,342 Z"/>
</g>
<path d="M213,337.5 H205 Q199,337.5 197,343" fill="none" stroke="#2a4f9c" stroke-width="4.5" shape-rendering="auto"/>
<path d="M189,342 H205 L197,350 Z" fill="#2a4f9c" shape-rendering="auto"/>
<path d="M199,354.5 H208 Q214,354.5 216,349" fill="none" stroke="#2a4f9c" stroke-width="4.5" shape-rendering="auto"/>
<path d="M208,350 H224 L216,342 Z" fill="#2a4f9c" shape-rendering="auto"/>
<!-- 4 cut -->
<path d="M255,328.5 L266,344 M278,328.5 L267,344" stroke="#f0901a" stroke-width="5.5" shape-rendering="auto"/>
<path d="M255.5,330 L266,344 M277.5,330 L267,344" stroke="#fcc419" stroke-width="2.6" shape-rendering="auto"/>
<path d="M257,329 L264,339 M276,329 L269,339" stroke="#fff" stroke-width="1" opacity="0.8" shape-rendering="auto"/>
<path d="M260,350 L266.5,344 L273,350" stroke="#8fb2d0" stroke-width="3" fill="none" shape-rendering="auto"/>
<rect x="262" y="344" width="9" height="3" fill="#c8c8c8"/>
<circle cx="256.5" cy="355.5" r="5" fill="#fff" stroke="#2a6faa" stroke-width="3.2" shape-rendering="auto"/>
<circle cx="275.5" cy="355.5" r="5" fill="#fff" stroke="#2a6faa" stroke-width="3.2" shape-rendering="auto"/>
<!-- 5 copy -->
<rect x="294" y="328" width="19" height="26" fill="#fff" stroke="#5a5a5a" stroke-width="2"/>
<rect x="298" y="334" width="4" height="2" fill="#b0b0b0"/><rect x="298" y="339" width="4" height="2" fill="#b0b0b0"/><rect x="298" y="343" width="4" height="2" fill="#b0b0b0"/><rect x="298" y="348" width="4" height="2" fill="#b0b0b0"/>
<path d="M306,333 H320 L327,340 V358 H306 Z" fill="#fff" stroke="#005a96" stroke-width="2.4"/>
<path d="M319,332 L328,341 H319 Z" fill="#005a96"/>
<rect x="309" y="339" width="7" height="2" fill="#fcc419"/><rect x="309" y="344" width="14" height="2" fill="#fcc419"/><rect x="309" y="349" width="14" height="2" fill="#fcc419"/><rect x="309" y="353" width="14" height="2" fill="#fcc419"/>
<!-- 6 paste -->
<rect x="338" y="330" width="28" height="26" fill="#fff" stroke="#5a5a5a" stroke-width="2"/>
<rect x="344" y="327" width="16" height="6" fill="#5a5a5a"/>
<path d="M354,340 H366 L373,347 V361 H354 Z" fill="#fff" stroke="#005a96" stroke-width="2.4"/>
<path d="M365,339 L374,348 H365 Z" fill="#005a96"/>
<rect x="358" y="345" width="3" height="2" fill="#fcc419"/><rect x="358" y="350" width="11" height="2" fill="#fcc419"/><rect x="358" y="355" width="11" height="2" fill="#fcc419"/>
<!-- 7 undo -->
<path d="M403,345 L411,336 H421 Q429,336 429,345 Q429,352 424,356" fill="none" stroke="#1a67a3" stroke-width="7" shape-rendering="auto"/>
<path d="M403,345 L411,336 H421 Q429,336 429,345 Q429,352 424,356" fill="none" stroke="#94b8da" stroke-width="3.4" shape-rendering="auto"/>
<path d="M399,334 L413,348 H399 Z" fill="#8cb0d4"/>
<rect x="397" y="332" width="3" height="18" fill="#1a67a3"/><rect x="397" y="347" width="18" height="3" fill="#1a67a3"/>
<!-- 8 new -->
<path d="M458,328 H474 L483,337 V361 H458 Z" fill="#fff" stroke="#555" stroke-width="2.4"/>
<path d="M473,327 L484,338 H473 Z" fill="#555"/>
<!-- 9 insert row -->
<rect x="500" y="328" width="26" height="30" fill="#fff" stroke="#555" stroke-width="2.4"/>
<rect x="501" y="334" width="23" height="7" fill="#78b41e"/>
<rect x="501" y="348" width="14" height="2" fill="#555"/>
<circle cx="525.5" cy="352" r="10" fill="#2f6e3a" shape-rendering="auto"/>
<rect x="523.5" y="346" width="4" height="12" fill="#fff"/><rect x="519.5" y="350" width="12" height="4" fill="#fff"/>
<!-- 10 delete row -->
<rect x="547" y="328" width="26" height="30" fill="#fff" stroke="#555" stroke-width="2.4"/>
<rect x="548" y="334" width="23" height="7" fill="#e05a10"/>
<rect x="548" y="348" width="14" height="2" fill="#555"/>
<circle cx="573.5" cy="351.5" r="9" fill="#5a5a5a" shape-rendering="auto"/>
<rect x="567" y="350" width="14" height="5" fill="#fff"/>
<!-- 11 copy row -->
<rect x="596" y="330" width="19" height="24" fill="#eee" stroke="#5a5a5a" stroke-width="2.4"/>
<rect x="598" y="332" width="4" height="20" fill="#fff"/>
<rect x="608" y="335" width="19" height="23" fill="#ececec" stroke="#b8200a" stroke-width="2.4"/>
<rect x="609.5" y="336.5" width="16" height="2" fill="#fff"/><rect x="609.5" y="336.5" width="2" height="20" fill="#fff"/><rect x="609.5" y="354.5" width="16" height="2" fill="#fff"/><rect x="623.5" y="336.5" width="2" height="20" fill="#fff"/>
<!-- 12 sort asc -->
<rect x="661" y="328" width="11" height="7" fill="#86bc2e" stroke="#2d6b3a" stroke-width="2"/>
<rect x="656" y="340" width="21" height="7" fill="#a4c0dc" stroke="#00538f" stroke-width="2"/>
<rect x="651" y="351" width="31" height="7" fill="#86bc2e" stroke="#2d6b3a" stroke-width="2"/>
<!-- 13 sort desc -->
<rect x="698" y="328" width="31" height="7" fill="#86bc2e" stroke="#2d6b3a" stroke-width="2"/>
<rect x="703" y="340" width="21" height="7" fill="#a4c0dc" stroke="#00538f" stroke-width="2"/>
<rect x="708" y="351" width="11" height="7" fill="#86bc2e" stroke="#2d6b3a" stroke-width="2"/>
<!-- 14 find -->
<path d="M750,328 H757 V338 H764 V328 H771 V337 L773,339 H776 V361 H764 V345 H757 V361 H745 V339 H748 L750,337 Z" fill="#94b4d6" stroke="#00568f" stroke-width="2.2"/>
<!-- 15 find next (disabled) -->
<path d="M797,328 H804 V338 H811 V328 H818 V337 L820,339 H823 V361 H811 V345 H804 V361 H792 V339 H795 L797,337 Z" fill="#d0dce8" stroke="#9cc0d8" stroke-width="2.2"/>
<circle cx="816.5" cy="348" r="9" fill="#b8c8e0" shape-rendering="auto"/>
<path d="M814.5,342 h4 v4 h4 v4 h-4 v4 h-4 v-4 h-4 v-4 h4 z" fill="#fff" stroke="#8e9ccc" stroke-width="1.5"/>
<!-- 16 filter -->
<path d="M836,328 H867 V335 L856,344 V358 H848 V344 L836,335 Z" fill="#94b4d6" stroke="#00568f" stroke-width="2.2"/>
<circle cx="860" cy="346.5" r="4.5" fill="#fde9a6" stroke="#00568f" stroke-width="1.6" shape-rendering="auto"/>
<!-- 17 sum (disabled) -->
<path d="M901,328 H929 V339.5 H922 V333.5 H910 L917,343 L910,351 H922 V346 H929 V358 H901 V351 L908,343 L901,336 Z" fill="#b8d88c" stroke="#8aac90" stroke-width="2"/>
<!-- 18 subtotal (disabled) -->
<rect x="956" y="328" width="16" height="16" fill="#f6d890" stroke="#eeb08c" stroke-width="2"/>
<rect x="974" y="345" width="17" height="16" fill="#eba688" stroke="#e09080" stroke-width="2"/>
<path d="M958,335 h2 v-3 h6 v3 h-3 v5 h3 v3 h-6 v-3 h-2 z" fill="#eeac88"/>
<path d="M977,352 h2 v-3 h6 v3 h-3 v5 h3 v3 h-6 v-3 h-2 z" fill="#d8867a"/>
<path d="M956,361 L991,327" stroke="#fff" stroke-width="2.5" shape-rendering="auto"/>
<path d="M956,361 L991,327" stroke="#8c8c8c" stroke-width="2.2" stroke-dasharray="2,2" shape-rendering="auto"/>
<!-- 19 print -->
<path d="M1031,339 V328 H1046 L1052,334 V339" fill="#fff" stroke="#5a5a5a" stroke-width="2"/>
<rect x="1024" y="342" width="35" height="12" fill="#94b4d6" stroke="#00568f" stroke-width="2.4"/>
<rect x="1051" y="345" width="4" height="5" fill="#fff"/>
<rect x="1028" y="357" width="27" height="5" fill="#00568f"/>
<!-- 20 views -->
<path d="M1083,328 H1097 L1104,335 V354 H1083 Z" fill="#fff" stroke="#005a96" stroke-width="2.4"/>
<path d="M1096,327 L1105,336 H1096 Z" fill="#005a96"/>
<rect x="1089" y="334" width="4" height="2" fill="#7fa6c8"/><rect x="1093" y="339" width="7" height="2" fill="#7fa6c8"/><rect x="1096" y="343" width="4" height="2" fill="#7fa6c8"/><rect x="1096" y="348" width="4" height="2" fill="#7fa6c8"/>
<circle cx="1080.5" cy="349" r="11.5" fill="#c4d8ea" stroke="#5a5a5a" stroke-width="2.2" shape-rendering="auto"/>
<rect x="1080" y="341" width="2" height="16" fill="#005a96"/>
<rect x="1084" y="344" width="8" height="10" fill="#fff"/><rect x="1084" y="348" width="8" height="3" fill="#7fa6c8"/>
<!-- 21 export -->
<rect x="1126" y="328" width="19" height="28" fill="#94b4d6" stroke="#005a96" stroke-width="2.4"/>
<rect x="1130" y="332" width="8" height="2" fill="#fff"/><rect x="1130" y="336" width="8" height="2" fill="#fff"/>
<path d="M1140,333 H1155 L1161,339 V361 H1140 Z" fill="#fff" stroke="#5a5a5a" stroke-width="2.4"/>
<rect x="1138" y="334" width="3" height="8" fill="#fff"/>
<path d="M1135,343 H1144 V339 H1147 L1155,348 L1147,357 H1144 V353 H1135 Z" fill="#80bc2c" stroke="#2e6b35" stroke-width="2"/>
<!-- 22 layout grid -->
<rect x="1184" y="329" width="37" height="30" fill="#5a5a62"/>
<rect x="1186" y="332" width="10" height="7" fill="#fdd35a"/><rect x="1198" y="332" width="9" height="7" fill="#a4c2e0"/><rect x="1209" y="332" width="10" height="7" fill="#a8d070"/>
<rect x="1186" y="341" width="10" height="7" fill="#f5961e"/><rect x="1198" y="341" width="9" height="7" fill="#dcb4a4"/><rect x="1209" y="341" width="10" height="7" fill="#fdc30e"/>
<rect x="1186" y="350" width="10" height="7" fill="#f8c8cc"/><rect x="1198" y="350" width="9" height="7" fill="#b0d898"/><rect x="1209" y="350" width="10" height="7" fill="#90b8e0"/>
<!-- 23 graphic -->
<rect x="1240" y="328" width="12" height="33" fill="#94b4d6" stroke="#00568f" stroke-width="2.4"/>
<rect x="1243" y="331" width="5" height="26" fill="#b4cce4"/>
<rect x="1258" y="333" width="12" height="18" fill="#fcc419" stroke="#f5961e" stroke-width="2.4"/>
<rect x="1263" y="342" width="12" height="19" fill="#e05a18" stroke="#b8301a" stroke-width="2.4"/>
<rect x="1252" y="349" width="11" height="12" fill="#80bc2c" stroke="#2e6b35" stroke-width="2.4"/>
<!-- 24 info -->
<rect x="1295" y="328" width="33" height="30" fill="#fff" stroke="#0079c2" stroke-width="2.4"/>
<rect x="1308" y="332" width="7" height="7" fill="#0079c2"/>
<rect x="1305" y="341" width="10" height="3" fill="#0079c2"/><rect x="1308" y="341" width="7" height="13" fill="#0079c2"/><rect x="1306" y="352" width="11" height="3" fill="#0079c2"/>
</g>

</svg>
</body></html>
